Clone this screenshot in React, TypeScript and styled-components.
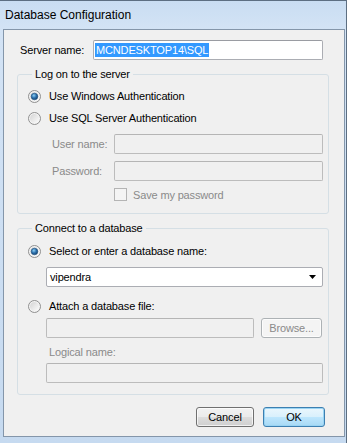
import React from 'react';
import styled, { createGlobalStyle } from 'styled-components';

const GlobalStyle = createGlobalStyle`
  html, body {
    margin: 0;
    padding: 0;
    background: #ffffff;
  }
  body {
    font-family: "Liberation Sans", Arial, sans-serif;
    font-size: 11px;
    color: #000;
  }
`

const Window = styled.div`
  width: 346px;
  height: 442px;
  border-top: 1px solid #5d6f82;
  border-right: 1px solid #5d6f82;
  background: linear-gradient(180deg, #c9ddf2 0px, #d3e3f5 28px, #c6daf0 100%);
  display: flex;
  flex-direction: column;
`
const TitleBar = styled.div`
  height: 28px;
  padding-left: 5px;
  display: flex;
  align-items: center;
  font-size: 12px;
  color: #000;
  flex: none;
`
const Client = styled.div`
  box-sizing: border-box;
  margin-left: 3px;
  width: 342px;
  height: 408px;
  flex: none;
  background: #f0f0f0;
  border: 1px solid #8496aa;
  display: flex;
  flex-direction: column;
  letter-spacing: -0.15px;
`
const ServerRow = styled.div`
  display: flex;
  align-items: center;
  height: 20px;
  margin-top: 10px;
  padding-left: 16px;
`
const Label = styled.span<{ $width?: number; $disabled?: boolean }>`
  width: ${p => (p.$width ? `${p.$width}px` : 'auto')};
  flex: none;
  color: ${p => (p.$disabled ? '#8a8a8a' : '#000')};
  white-space: nowrap;
`
const TextBox = styled.div<{ $width: number; $disabled?: boolean }>`
  box-sizing: border-box;
  width: ${p => p.$width}px;
  height: 20px;
  flex: none;
  border: 1px solid ${p => (p.$disabled ? '#bcbcbc' : '#abadb3')};
  border-top-color: ${p => (p.$disabled ? '#b5b5b5' : '#9a9ca2')};
  border-radius: 2px;
  background: ${p => (p.$disabled ? '#f0f0f0' : '#ffffff')};
  display: flex;
  align-items: center;
  padding-left: 1px;
`
const Selected = styled.span`
  background: #3399ff;
  color: #fff;
  line-height: 14px;
  padding: 0 1px;
`
const Group = styled.fieldset<{ $top: number; $pad: string }>`
  box-sizing: border-box;
  width: 312px;
  margin: ${p => p.$top}px 0 0 13px;
  padding: ${p => p.$pad};
  border: 1px solid #d5dfe5;
  border-radius: 3px;
  min-width: 0;
`
const Legend = styled.legend`
  margin-left: 4px;
  padding: 0 3px;
  line-height: 14px;
  font-size: 11px;
`
const OptionRow = styled.label<{ $mt?: number }>`
  display: flex;
  align-items: center;
  gap: 8px;
  height: 22px;
  margin-top: ${p => p.$mt || 0}px;
`
const FieldRow = styled.div<{ $mt: number; $indent: number }>`
  display: flex;
  align-items: center;
  height: 20px;
  margin-top: ${p => p.$mt}px;
  padding-left: ${p => p.$indent}px;
  gap: 7px;
`
const CheckRow = styled.div`
  display: flex;
  align-items: center;
  gap: 6px;
  height: 17px;
  margin-top: 5px;
  margin-left: 86px;
`
const CheckBox = styled.span`
  box-sizing: border-box;
  width: 13px;
  height: 13px;
  border: 1px solid #b4b4b4;
  background: #f4f4f4;
  flex: none;
`
const Combo = styled.div`
  box-sizing: border-box;
  width: 277px;
  height: 20px;
  margin: 5px 0 0 18px;
  border: 1px solid #abadb3;
  border-radius: 2px;
  background: #fff;
  display: flex;
  align-items: center;
  justify-content: space-between;
  padding: 0 6px 0 3px;
`
const Caption = styled.div`
  height: 16px;
  margin: 6px 0 0 21px;
  display: flex;
  align-items: center;
  color: #8a8a8a;
`
const Button = styled.button<{ $width: number; $default?: boolean }>`
  box-sizing: border-box;
  width: ${p => p.$width}px;
  height: 20px;
  padding: 0;
  font-family: inherit;
  font-size: 11px;
  letter-spacing: inherit;
  color: ${p => (p.disabled ? '#8a8a8a' : '#000')};
  border-radius: 3px;
  border: 1px solid ${p => (p.$default ? '#3c7fb1' : p.disabled ? '#adb2b5' : '#707070')};
  background: ${p =>
    p.disabled
      ? '#f4f4f4'
      : p.$default
      ? 'linear-gradient(180deg, #eaf6fd 0%, #d9f0fc 50%, #bee6fd 51%, #a7d9f5 100%)'
      : 'linear-gradient(180deg, #f2f2f2 0%, #ebebeb 50%, #dddddd 51%, #cfcfcf 100%)'};
  box-shadow: ${p => (p.$default ? 'inset 0 0 0 1px #9ad4f3' : 'inset 0 0 0 1px rgba(255,255,255,0.7)')};
`
const ButtonRow = styled.div`
  display: flex;
  justify-content: flex-end;
  gap: 9px;
  margin-top: 12px;
  padding-right: 19px;
`

function Radio({ checked }: { checked?: boolean }) {
  return (
    <svg width="13" height="13" viewBox="0 0 13 13" style={{ flex: 'none' }}>
      <defs>
        <linearGradient id="rfill" x1="0" y1="0" x2="1" y2="1">
          <stop offset="0" stopColor="#d4d4d4" />
          <stop offset="1" stopColor="#fcfcfc" />
        </linearGradient>
        <radialGradient id="rdot" cx="0.4" cy="0.35" r="0.7">
          <stop offset="0" stopColor="#8fd0f3" />
          <stop offset="0.5" stopColor="#2e73b0" />
          <stop offset="1" stopColor="#123f6a" />
        </radialGradient>
      </defs>
      <circle cx="6.5" cy="6.5" r="6" fill="#f4f4f4" stroke="#8f8f8f" strokeWidth="1" />
      <circle cx="6.5" cy="6.5" r="4.5" fill="url(#rfill)" />
      {checked && <circle cx="6.5" cy="6.5" r="3.3" fill="url(#rdot)" stroke="#1d4f7d" strokeWidth="0.6" />}
    </svg>
  );
}

function App() {
  return (
    <>
      <GlobalStyle />
      <Window>
        <TitleBar>Database Configuration</TitleBar>
        <Client>
          <ServerRow>
            <Label $width={73}>Server name:</Label>
            <TextBox $width={230}>
              <Selected>MCNDESKTOP14\SQL</Selected>
            </TextBox>
          </ServerRow>

          <Group $top={7} $pad="4px 4px 10px 10px">
            <Legend>Log on to the server</Legend>
            <OptionRow>
              <Radio checked />
              Use Windows Authentication
            </OptionRow>
            <OptionRow>
              <Radio />
              Use SQL Server Authentication
            </OptionRow>
            <FieldRow $mt={5} $indent={24}>
              <Label $width={55} $disabled>User name:</Label>
              <TextBox $width={209} $disabled />
            </FieldRow>
            <FieldRow $mt={7} $indent={24}>
              <Label $width={55} $disabled>Password:</Label>
              <TextBox $width={209} $disabled />
            </FieldRow>
            <CheckRow>
              <CheckBox />
              <Label $disabled>Save my password</Label>
            </CheckRow>
          </Group>

          <Group $top={7} $pad="5px 4px 11px 10px">
            <Legend>Connect to a database</Legend>
            <OptionRow>
              <Radio checked />
              Select or enter a database name:
            </OptionRow>
            <Combo>
              vipendra
              <svg width="7" height="4" viewBox="0 0 7 4">
                <path d="M0 0 H7 L3.5 4 Z" fill="#000" />
              </svg>
            </Combo>
            <OptionRow $mt={8}>
              <Radio />
              Attach a database file:
            </OptionRow>
            <FieldRow $mt={1} $indent={18}>
              <TextBox $width={208} $disabled />
              <Button $width={61} disabled>Browse...</Button>
            </FieldRow>
            <Caption>Logical name:</Caption>
            <FieldRow $mt={3} $indent={18}>
              <TextBox $width={277} $disabled />
            </FieldRow>
          </Group>

          <ButtonRow>
            <Button $width={58}>Cancel</Button>
            <Button $width={62} $default>OK</Button>
          </ButtonRow>
        </Client>
      </Window>
    </>
  );
}

export default App;
